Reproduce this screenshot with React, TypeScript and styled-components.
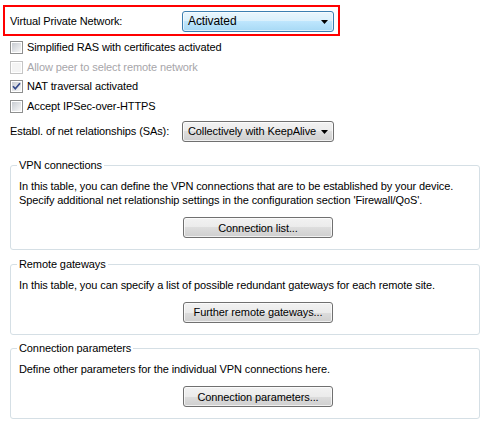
import React from "react";
import styled, { createGlobalStyle, css } from "styled-components";

const Global = createGlobalStyle`
  html, body { margin: 0; padding: 0; background: #ffffff; }
  body {
    font-family: "Liberation Sans", Arial, sans-serif;
    font-size: 11px;
    letter-spacing: -0.1px;
    color: #000000;
  }
  * { box-sizing: border-box; }
`;

const Page = styled.div`
  width: 490px;
  height: 427px;
  padding-top: 5px;
  display: flex;
  flex-direction: column;
`;

const HighlightBox = styled.div`
  margin-left: 3px;
  width: 337px;
  height: 31px;
  border: 2px solid #ff0000;
  padding: 2px 4px 0 5px;
  display: flex;
  align-items: center;
  justify-content: space-between;
`;

const Label = styled.span`
  line-height: 13px;
  white-space: nowrap;
`;

const SelectBox = styled.div<{ $focused?: boolean }>`
  width: 152px;
  height: 21px;
  border-radius: 3px;
  display: flex;
  align-items: center;
  justify-content: space-between;
  padding: 0 5px 0 5px;
  white-space: nowrap;
  ${(p) =>
    p.$focused
      ? css`
          border: 1px solid #3c7fb1;
          background: linear-gradient(#eaf6fd 0%, #d9f0fc 50%, #bee6fd 50%, #a7d9f5 100%);
          box-shadow: inset 0 0 0 1px rgba(255, 255, 255, 0.6);
          font-size: 12px;
        `
      : css`
          border: 1px solid #707070;
          background: linear-gradient(#f2f2f2 0%, #ebebeb 50%, #dddddd 50%, #cfcfcf 100%);
          box-shadow: inset 0 0 0 1px rgba(255, 255, 255, 0.7);
        `}
`;

const SelectText = styled.span`
  line-height: 13px;
`;

const Arrow = () => (
  <svg width="7" height="4" viewBox="0 0 7 4">
    <polygon points="0,0 7,0 3.5,4" fill="#000000" />
  </svg>
);

const CheckList = styled.div`
  margin: 2px 0 0 10px;
  display: flex;
  flex-direction: column;
`;

const CheckRow = styled.div<{ $disabled?: boolean }>`
  height: 19.5px;
  display: flex;
  align-items: center;
  gap: 4px;
  color: ${(p) => (p.$disabled ? "#a7a6aa" : "#000000")};
`;

const Box = styled.span<{ $disabled?: boolean }>`
  width: 13px;
  height: 13px;
  flex: none;
  position: relative;
  border: 1px solid ${(p) => (p.$disabled ? "#c5c5c5" : "#8e8f8f")};
  background: #ffffff;
  display: flex;
  align-items: center;
  justify-content: center;
  &::before {
    content: "";
    position: absolute;
    left: 1px;
    top: 1px;
    right: 1px;
    bottom: 1px;
    background: ${(p) =>
      p.$disabled
        ? "#f4f4f4"
        : "linear-gradient(135deg, #c8ccd2 0%, #e2e4e7 55%, #f7f7f7 100%)"};
  }
  svg { position: relative; }
`;

const Check = () => (
  <svg width="11" height="11" viewBox="0 0 11 11">
    <path d="M2 5.2 L4.3 7.8 L9 2.2" fill="none" stroke="#34498a" strokeWidth="1.7" />
  </svg>
);

const CheckItem = ({ label, checked, disabled }: { label: string; checked?: boolean; disabled?: boolean }) => (
  <CheckRow $disabled={disabled}>
    <Box $disabled={disabled}>{checked && <Check />}</Box>
    <Label>{label}</Label>
  </CheckRow>
);

const FieldRow = styled.div`
  margin: 5px 0 0 10px;
  display: flex;
  align-items: center;
`;

const FieldLabel = styled.span`
  width: 172px;
  line-height: 13px;
  white-space: nowrap;
`;

const Groups = styled.div`
  margin: 17px 0 0 10px;
  width: 470px;
  display: flex;
  flex-direction: column;
  gap: 7.5px;
`;

const Group = styled.fieldset`
  margin: 0;
  min-width: 0;
  padding: 7px 8px 11px 8px;
  border: 1px solid #d5dfe5;
  border-radius: 3px;
`;

const Legend = styled.legend`
  padding: 0 2px;
  margin-left: -2px;
  line-height: 13px;
`;

const Desc = styled.p`
  margin: 0;
  line-height: 14px;
`;

const Button = styled.button`
  margin: 10px 0 0 164px;
  width: 150px;
  height: 21px;
  padding: 0;
  border: 1px solid #707070;
  border-radius: 3px;
  background: linear-gradient(#f2f2f2 0%, #ebebeb 50%, #dddddd 50%, #cfcfcf 100%);
  box-shadow: inset 0 0 0 1px rgba(255, 255, 255, 0.7);
  font-family: "Liberation Sans", Arial, sans-serif;
  font-size: 11px;
  letter-spacing: -0.1px;
  color: #000000;
  display: block;
`;

export default function App() {
  return (
    <>
      <Global />
      <Page>
        <HighlightBox>
          <Label>Virtual Private Network:</Label>
          <SelectBox $focused>
            <SelectText>Activated</SelectText>
            <Arrow />
          </SelectBox>
        </HighlightBox>
        <CheckList>
          <CheckItem label="Simplified RAS with certificates activated" />
          <CheckItem label="Allow peer to select remote network" disabled />
          <CheckItem label="NAT traversal activated" checked />
          <CheckItem label="Accept IPSec-over-HTTPS" />
        </CheckList>
        <FieldRow>
          <FieldLabel>Establ. of net relationships (SAs):</FieldLabel>
          <SelectBox>
            <SelectText>Collectively with KeepAlive</SelectText>
            <Arrow />
          </SelectBox>
        </FieldRow>
        <Groups>
          <Group>
            <Legend>VPN connections</Legend>
            <Desc>
              In this table, you can define the VPN connections that are to be established by your device.
              <br />
              Specify additional net relationship settings in the configuration section 'Firewall/QoS'.
            </Desc>
            <Button>Connection list...</Button>
          </Group>
          <Group>
            <Legend>Remote gateways</Legend>
            <Desc>In this table, you can specify a list of possible redundant gateways for each remote site.</Desc>
            <Button>Further remote gateways...</Button>
          </Group>
          <Group>
            <Legend>Connection parameters</Legend>
            <Desc>Define other parameters for the individual VPN connections here.</Desc>
            <Button>Connection parameters...</Button>
          </Group>
        </Groups>
      </Page>
    </>
  );
}
